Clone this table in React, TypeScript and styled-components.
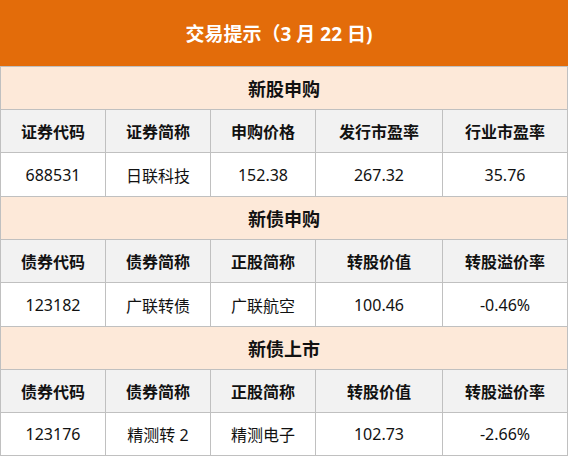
import React from 'react';
import styled, { createGlobalStyle } from 'styled-components';

type Section = {
  title: string;
  headers: string[];
  row: string[];
};

const sections: Section[] = [
  {
    title: '新股申购',
    headers: ['证券代码', '证券简称', '申购价格', '发行市盈率', '行业市盈率'],
    row: ['688531', '日联科技', '152.38', '267.32', '35.76'],
  },
  {
    title: '新债申购',
    headers: ['债券代码', '债券简称', '正股简称', '转股价值', '转股溢价率'],
    row: ['123182', '广联转债', '广联航空', '100.46', '-0.46%'],
  },
  {
    title: '新债上市',
    headers: ['债券代码', '债券简称', '正股简称', '转股价值', '转股溢价率'],
    row: ['123176', '精测转 2', '精测电子', '102.73', '-2.66%'],
  },
];

const App: React.FC = () => {
  return (
    <>
      <GlobalStyle />
      <Board>
        <Banner>交易提示（3 月 22 日)</Banner>
        {sections.map((section) => (
          <React.Fragment key={section.title}>
            <SectionTitle>{section.title}</SectionTitle>
            {section.headers.map((h, i) => (
              <HeadCell key={'h' + i}>{h}</HeadCell>
            ))}
            {section.row.map((v, i) => (
              <DataCell key={'d' + i}>{v}</DataCell>
            ))}
          </React.Fragment>
        ))}
      </Board>
    </>
  );
};

export default App;

const GlobalStyle = createGlobalStyle`
  body {
    margin: 0;
    background: #ffffff;
    font-family: "Noto Sans", "Noto Sans CJK SC", sans-serif;
  }
`;

const Board = styled.div`
  display: grid;
  width: 568px;
  box-sizing: border-box;
  grid-template-columns: 104px 104px 104px 126px 124px;
  grid-template-rows: 66px 42px 42px 43px 42px 42px 43px 42px 42px 42px;
  gap: 1px;
  padding: 0 1px 1px 1px;
  background: #c0c0c0;
  color: #111111;
`;

const Cell = styled.div`
  display: flex;
  align-items: center;
  justify-content: center;
  white-space: nowrap;
`;

const Banner = styled(Cell)`
  grid-column: 1 / -1;
  margin: 0 -1px;
  padding-right: 10px;
  background: #e36c0a;
  color: #ffffff;
  font-size: 19px;
  font-weight: 700;
`;

const SectionTitle = styled(Cell)`
  grid-column: 1 / -1;
  background: #fde9d9;
  font-size: 18px;
  font-weight: 700;
`;

const HeadCell = styled(Cell)`
  background: #f2f2f2;
  font-size: 16px;
  font-weight: 700;
`;

const DataCell = styled(Cell)`
  background: #ffffff;
  font-size: 16px;
`;
